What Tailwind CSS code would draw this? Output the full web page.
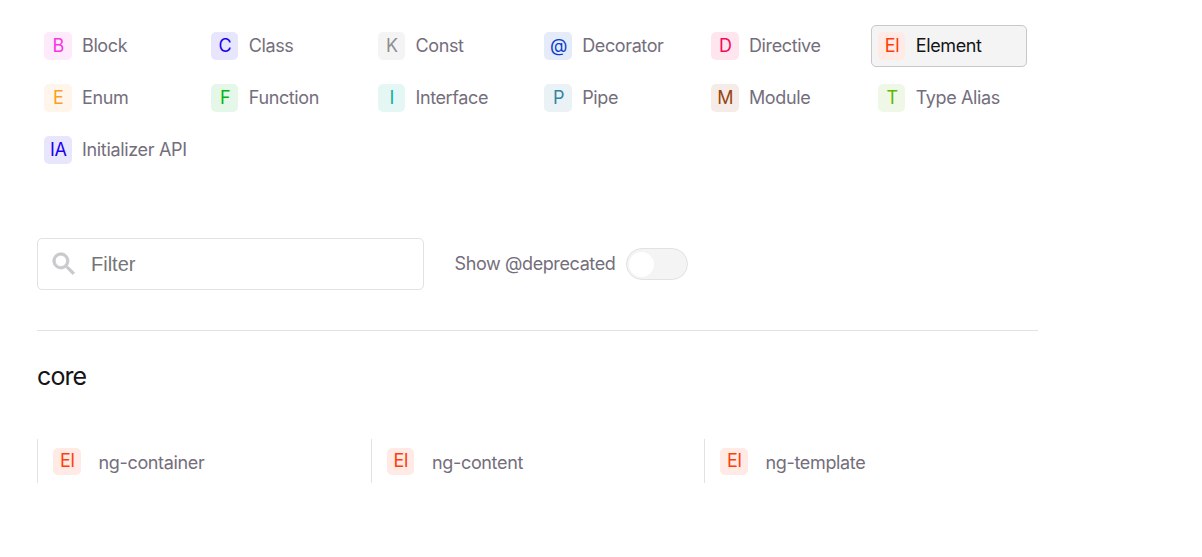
<!DOCTYPE html>
<html lang="en">
<head>
<meta charset="utf-8">
<title>API Reference</title>
<script src="https://cdn.jsdelivr.net/npm/@tailwindcss/browser@4"></script>
</head>
<body class="bg-white font-['Inter',sans-serif] text-[18px] font-[430] leading-6 tracking-[-0.39px] whitespace-nowrap text-[#746e7c]">
<main class="ml-[37px] w-[1001px] pt-[25px]">
  <ul class="grid w-[990px] grid-cols-6 gap-x-[10.5px] gap-y-[10px]">
    <li class="flex h-[42px] items-center gap-[10.5px] px-[7px]"><span class="flex size-[27.5px] shrink-0 items-center justify-center rounded-[5px] bg-[#fdebfc] pl-px font-normal text-[#f637e3]">B</span>Block</li>
    <li class="flex h-[42px] items-center gap-[10.5px] px-[7px]"><span class="flex size-[27.5px] shrink-0 items-center justify-center rounded-[5px] bg-[#e8e6fc] pl-px font-normal text-[#1c00f0]">C</span>Class</li>
    <li class="flex h-[42px] items-center gap-[10.5px] px-[7px]"><span class="flex size-[27.5px] shrink-0 items-center justify-center rounded-[5px] bg-[#f4f4f4] pl-px font-normal text-[#8f8f8f]">K</span>Const</li>
    <li class="flex h-[42px] items-center gap-[10.5px] px-[7px]"><span class="flex size-[27.5px] shrink-0 items-center justify-center rounded-[5px] bg-[#e5ebf9] pl-px font-normal text-[#0a3fcb]">@</span>Decorator</li>
    <li class="flex h-[42px] items-center gap-[10.5px] px-[7px]"><span class="flex size-[27.5px] shrink-0 items-center justify-center rounded-[5px] bg-[#ffe6ee] pl-px font-normal text-[#f20a5c]">D</span>Directive</li>
    <li class="flex h-[42px] items-center gap-[10.5px] rounded-[5px] border border-[#c8c8c8] bg-[#f4f4f4] px-[6px] text-[#151417]"><span class="flex size-[27.5px] shrink-0 items-center justify-center rounded-[5px] bg-[#ffeae5] pl-px font-normal text-[#ff3d08]">El</span>Element</li>
    <li class="flex h-[42px] items-center gap-[10.5px] px-[7px]"><span class="flex size-[27.5px] shrink-0 items-center justify-center rounded-[5px] bg-[#fff5eb] pl-px font-normal text-[#fe9d26]">E</span>Enum</li>
    <li class="flex h-[42px] items-center gap-[10.5px] px-[7px]"><span class="flex size-[27.5px] shrink-0 items-center justify-center rounded-[5px] bg-[#e5f7e8] pl-px font-normal text-[#00b80c]">F</span>Function</li>
    <li class="flex h-[42px] items-center gap-[10.5px] px-[7px]"><span class="flex size-[27.5px] shrink-0 items-center justify-center rounded-[5px] bg-[#e5f7f5] pl-px font-normal text-[#13ada2]">I</span>Interface</li>
    <li class="flex h-[42px] items-center gap-[10.5px] px-[7px]"><span class="flex size-[27.5px] shrink-0 items-center justify-center rounded-[5px] bg-[#eaf2f6] pl-px font-normal text-[#3284a8]">P</span>Pipe</li>
    <li class="flex h-[42px] items-center gap-[10.5px] px-[7px]"><span class="flex size-[27.5px] shrink-0 items-center justify-center rounded-[5px] bg-[#f5ece7] pl-px font-normal text-[#994411]">M</span>Module</li>
    <li class="flex h-[42px] items-center gap-[10.5px] px-[7px]"><span class="flex size-[27.5px] shrink-0 items-center justify-center rounded-[5px] bg-[#eff8e7] pl-px font-normal text-[#5cb800]">T</span>Type Alias</li>
    <li class="flex h-[42px] items-center gap-[10.5px] px-[7px]"><span class="flex size-[27.5px] shrink-0 items-center justify-center rounded-[5px] bg-[#e8e6fc] pl-px font-normal text-[#1c00f0]">IA</span><span class="tracking-[-0.33px]">Initializer API</span></li>
  </ul>
  <div class="mt-[67px] flex h-[52px] items-center">
    <label class="flex h-full w-[387px] items-center rounded-[5px] border border-[#e2e2e4] pl-[11px]">
      <svg class="size-[30px] shrink-0" viewBox="0 0 24 24" fill="#c9c8cc" stroke="#c9c8cc" stroke-width="0.6"><path d="M15.5 14h-.79l-.28-.27A6.471 6.471 0 0 0 16 9.5 6.5 6.5 0 1 0 9.5 16c1.61 0 3.09-.59 4.23-1.57l.27.28v.79l5 4.99L20.49 19zm-6 0C7.01 14 5 11.99 5 9.5S7.01 5 9.5 5 14 7.01 14 9.5 11.99 14 9.5 14"/></svg>
      <span class="ml-[12px] font-['Liberation_Sans',Arial,sans-serif] text-[20px] font-normal tracking-normal text-[#757575]">Filter</span>
    </label>
    <span class="w-[202px] pl-[30.5px]">Show @deprecated</span>
    <span class="flex h-8 w-[62px] items-center rounded-full border border-[#e2e2e4] bg-[#f4f4f4] pl-[2px]"><span class="size-[25px] rounded-full bg-white"></span></span>
  </div>
  <section class="mt-[40px] border-t border-[#e2e2e4] pt-[29px]">
    <h2 class="text-[25px] font-normal leading-8 tracking-[-0.9px] text-[#151417]">core</h2>
    <ul class="mt-[47px] grid w-[1000.5px] grid-cols-3 tracking-[-0.34px]">
      <li class="flex h-[44px] items-center border-l border-[#e2e2e4] pl-[15px]"><span class="flex h-[27px] w-[27.5px] shrink-0 items-center justify-center rounded-[5px] bg-[#ffeae5] pl-px font-normal text-[#ff3d08]">El</span><span class="ml-[18px] pt-[4px]">ng-container</span></li>
      <li class="flex h-[44px] items-center border-l border-[#e2e2e4] pl-[15px]"><span class="flex h-[27px] w-[27.5px] shrink-0 items-center justify-center rounded-[5px] bg-[#ffeae5] pl-px font-normal text-[#ff3d08]">El</span><span class="ml-[18px] pt-[4px]">ng-content</span></li>
      <li class="flex h-[44px] items-center border-l border-[#e2e2e4] pl-[15px]"><span class="flex h-[27px] w-[27.5px] shrink-0 items-center justify-center rounded-[5px] bg-[#ffeae5] pl-px font-normal text-[#ff3d08]">El</span><span class="ml-[18px] pt-[4px]">ng-template</span></li>
    </ul>
  </section>
</main>
</body>
</html>
